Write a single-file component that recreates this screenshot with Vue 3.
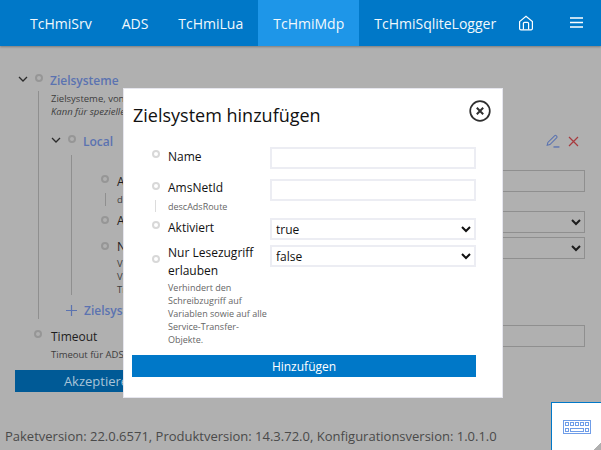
<template>
  <div class="page">
    <header class="topbar">
      <nav class="tabs">
        <a v-for="tab in tabs" :key="tab" class="tab" :class="{ active: tab === 'TcHmiMdp' }">{{ tab }}</a>
      </nav>
      <button class="bar-icon home">
        <svg width="16" height="16" viewBox="0 0 16 16" fill="none" stroke="#fff" stroke-width="1.2">
          <path d="M1.6 6.6 8 1.2l6.4 5.4v6.9a1.3 1.3 0 0 1-1.3 1.3H2.9a1.3 1.3 0 0 1-1.3-1.3z" />
          <path d="M5.4 14.6V8.6a1.2 1.2 0 0 1 1.2-1.2h2.8a1.2 1.2 0 0 1 1.2 1.2v6" />
        </svg>
      </button>
      <button class="bar-icon menu">
        <svg width="13" height="11" viewBox="0 0 13 11" stroke="#fff" stroke-width="1.4">
          <path d="M0 1h13M0 5.5h13M0 10h13" />
        </svg>
      </button>
    </header>

    <main class="content">
      <section class="tree">
        <div class="node-head">
          <svg class="chevron" width="10" height="6" viewBox="0 0 10 6" fill="none" stroke="#2b2b2b" stroke-width="1.3"><path d="M1 1l4 4 4-4" /></svg>
          <span class="dot"></span>
          <span class="link-title">Zielsysteme</span>
        </div>
        <div class="node-body outer">
          <p class="desc first">Zielsysteme, von</p>
          <p class="desc em">Kann für spezielle</p>

          <div class="node-head local">
            <svg class="chevron" width="10" height="6" viewBox="0 0 10 6" fill="none" stroke="#2b2b2b" stroke-width="1.3"><path d="M1 1l4 4 4-4" /></svg>
            <span class="dot"></span>
            <span class="link-title">Local</span>
            <span class="actions">
              <svg width="14" height="14" viewBox="0 0 15 14" fill="none" stroke="#5b73b0" stroke-width="1.1">
                <path d="M1.2 11.6 2 8.6 9.4 1.2a1 1 0 0 1 1.4 0l.8.8a1 1 0 0 1 0 1.4L4.2 10.8z" />
                <path d="M8 13.4h6.4" stroke-width="1.5" />
              </svg>
              <svg width="11" height="11" viewBox="0 0 11 11" stroke="#a83a3e" stroke-width="1.2"><path d="M1 1l9 9M10 1l-9 9" /></svg>
            </span>
          </div>

          <div class="node-body inner">
            <div class="row first-row">
              <div class="label-col">
                <span class="dot"></span>
                <span class="label">Ams</span>
              </div>
              <input class="back-input" type="text" />
            </div>
            <p class="desc tick">desc</p>
            <div class="row second-row">
              <div class="label-col">
                <span class="dot"></span>
                <span class="label up">Aktiv</span>
              </div>
              <select class="back-input"><option>true</option></select>
            </div>
            <div class="row third-row">
              <div class="label-col">
                <span class="dot"></span>
                <span class="label up">Nur</span>
              </div>
              <select class="back-input"><option>false</option></select>
            </div>
            <p class="desc line-one">Verhindert</p>
            <p class="desc">Variablen</p>
            <p class="desc">Transfer</p>
          </div>

          <div class="add-row">
            <svg width="11" height="11" viewBox="0 0 11 11" stroke="#5b73b0" stroke-width="1.2"><path d="M5.5 0v11M0 5.5h11" /></svg>
            <span class="link-title">Zielsystem</span>
          </div>
        </div>

        <div class="row timeout-row">
          <div class="label-col">
            <span class="dot"></span>
            <span class="label">Timeout</span>
          </div>
          <input class="back-input" type="text" />
        </div>
        <p class="desc timeout-desc">Timeout für ADS-Aufrufe</p>
        <button class="accept">Akzeptieren</button>
      </section>
    </main>

    <footer class="versions">Paketversion: 22.0.6571, Produktversion: 14.3.72.0, Konfigurationsversion: 1.0.1.0</footer>

    <div class="dialog">
      <div class="dialog-head">
        <h2>Zielsystem hinzufügen</h2>
        <svg class="close" width="22" height="22" viewBox="0 0 22 22" fill="none" stroke="#2f2f2f">
          <circle cx="11" cy="11" r="9.8" stroke-width="1.7" />
          <path d="M7.8 7.8l6.4 6.4M14.2 7.8l-6.4 6.4" stroke-width="2" />
        </svg>
      </div>

      <div v-for="field in fields" :key="field.name" class="field" :class="field.cls">
        <div class="field-label">
          <span class="dot light"></span>
          <div class="field-text">
            <div class="field-name">{{ field.name }}</div>
            <div v-if="field.desc" class="field-desc">{{ field.desc }}</div>
          </div>
        </div>
        <select v-if="field.value" class="field-input"><option>{{ field.value }}</option></select>
        <input v-else class="field-input" type="text" />
      </div>

      <button class="add">Hinzufügen</button>
    </div>

    <button class="keyboard">
      <svg width="28" height="14" viewBox="0 0 28 14" fill="none" stroke="#6f9de8" stroke-width="1">
        <rect x="0.5" y="0.5" width="27" height="13" />
        <rect x="2.5" y="2.5" width="3" height="3" />
        <rect x="7.5" y="2.5" width="3" height="3" />
        <rect x="12.5" y="2.5" width="3" height="3" />
        <rect x="17.5" y="2.5" width="3" height="3" />
        <rect x="22.5" y="2.5" width="3" height="3" />
        <rect x="2.5" y="8.5" width="3" height="3" />
        <rect x="7.5" y="8.5" width="13" height="3" />
        <rect x="22.5" y="8.5" width="3" height="3" />
      </svg>
    </button>
  </div>
</template>

<script setup>
const tabs = ['TcHmiSrv', 'ADS', 'TcHmiLua', 'TcHmiMdp', 'TcHmiSqliteLogger']

const fields = [
  { name: 'Name', cls: 'f-name' },
  { name: 'AmsNetId', desc: 'descAdsRoute', cls: 'f-net' },
  { name: 'Aktiviert', value: 'true', cls: 'f-active' },
  {
    name: 'Nur Lesezugriff erlauben',
    desc: 'Verhindert den Schreibzugriff auf Variablen sowie auf alle Service-Transfer-Objekte.',
    value: 'false',
    cls: 'f-read'
  }
]
</script>

<style>
html, body {
  margin: 0;
  background: #b0b0b0;
}
</style>

<style scoped>
.page {
  position: relative;
  width: 601px;
  height: 450px;
  overflow: hidden;
  display: flex;
  flex-direction: column;
  background: #b0b0b0;
  font-family: "Open Sans", sans-serif;
  color: #1d1d1d;
}

/* top navigation */
.topbar {
  height: 46px;
  flex: none;
  display: flex;
  align-items: stretch;
  background: #0078c8;
  box-shadow: 0 1px 2px rgba(0, 0, 0, 0.3);
}
.tabs {
  display: flex;
  padding-left: 15px;
}
.tab {
  padding: 0 15px;
  line-height: 48px;
  font-size: 14px;
  color: #f2f8fc;
}
.tab.active {
  background: #1e96e8;
}
.bar-icon {
  border: 0;
  padding: 0;
  background: none;
  display: flex;
  align-items: center;
}
.home {
  margin-left: 7px;
}
.menu {
  margin-left: 36px;
  margin-top: -1px;
}

/* settings tree behind the dialog */
.content {
  flex: 1;
  min-height: 0;
  padding: 26px 16px 0 15px;
}
.node-head {
  display: flex;
  align-items: center;
  height: 16px;
}
.chevron {
  margin-left: 3px;
  margin-top: -3px;
  margin-right: 7px;
}
.dot {
  flex: none;
  display: block;
  width: 4px;
  height: 4px;
  border: 2px solid #969696;
  border-radius: 50%;
  margin-top: -4px;
}
.link-title {
  margin-left: 7px;
  font-size: 12px;
  font-weight: 600;
  color: #5b73b0;
}
.node-body.outer {
  margin-left: 23px;
  padding-left: 12px;
  border-left: 1px solid #8f8f8f;
  margin-top: 3px;
}
.desc {
  margin: 0;
  font-size: 9.5px;
  line-height: 13px;
  color: #3d3d3d;
  white-space: nowrap;
}
.desc.first {
  padding-top: 1px;
}
.desc.em {
  font-style: italic;
}
.node-head.local {
  margin-top: 15px;
}
.node-head.local .chevron {
  margin-left: 0;
}
.actions {
  margin-left: auto;
  display: flex;
  gap: 8px;
  align-items: center;
  margin-right: 6px;
}
.node-body.inner {
  margin-left: 20px;
  padding-left: 29px;
  border-left: 1px solid #8f8f8f;
  margin-top: 6px;
  height: 140px;
}
.row {
  display: flex;
  align-items: center;
  justify-content: space-between;
}
.label-col {
  display: flex;
  align-items: center;
  gap: 8px;
}
.label {
  font-size: 12px;
  color: #1d1d1d;
}
.label.up {
  margin-top: -3px;
}
.back-input {
  box-sizing: border-box;
  width: 300px;
  height: 22px;
  border: 1px solid #8f8f8f;
  background: #b0b0b0;
  font: 12px "Open Sans", sans-serif;
  padding: 0 4px;
  color: #1d1d1d;
}
.first-row {
  padding-top: 15px;
}
.inner .desc {
  padding-left: 16px;
}
.inner .desc.tick {
  margin: 1px 0 0 4px;
  padding-left: 11px;
  border-left: 1px solid #8f8f8f;
}
.second-row {
  margin-top: 5px;
}
.third-row {
  margin-top: 4px;
}
.inner .desc.line-one {
  margin-top: -2px;
}
.add-row {
  display: flex;
  align-items: center;
  height: 18px;
  margin-left: 15px;
  margin-top: 6px;
}
.timeout-row {
  margin-left: 19px;
  margin-top: 6px;
}
.timeout-row .label-col {
  gap: 9px;
}
.timeout-desc {
  margin-left: 36px;
  margin-top: 1px;
}
.accept {
  display: block;
  margin-top: 9px;
  width: 170px;
  height: 22px;
  border: 0;
  padding: 0;
  background: #005a96;
  color: #a9c4d8;
  font: 13px "Open Sans", sans-serif;
}

.versions {
  flex: none;
  padding: 0 0 5px 5px;
  font-size: 13px;
  line-height: 18px;
  color: #4a4a4a;
  white-space: nowrap;
}

/* modal dialog */
.dialog {
  position: absolute;
  left: 123px;
  top: 88px;
  box-sizing: border-box;
  width: 380px;
  height: 310px;
  padding: 0 26px 0 8px;
  background: #fff;
  border: 1px solid #e6e6ee;
}
.dialog-head {
  display: flex;
  justify-content: space-between;
  height: 58px;
  margin-right: -15px;
}
.dialog-head h2 {
  margin: 13px 0 0 1px;
  font-size: 18px;
  font-weight: 400;
  line-height: 26px;
  color: #111;
}
.close {
  margin-top: 11px;
}
.field {
  display: flex;
  align-items: flex-start;
  justify-content: space-between;
}
.field-label {
  display: flex;
  width: 138px;
  flex: none;
}
.dot.light {
  border-color: #d8d8d8;
  margin: 3px 0 0 20px;
}
.field-text {
  margin-left: 8px;
  flex: 1;
}
.field-name {
  font-size: 12px;
  line-height: 18px;
  color: #111;
}
.f-name .field-name {
  margin-top: 1px;
}
.f-active .field-name {
  margin-top: 1px;
}
.f-read .field-name {
  margin-top: -1px;
}
.f-read .dot.light {
  margin-top: 10px;
}
.f-read .field-desc {
  margin-top: 1px;
}
.f-net .field-desc {
  position: relative;
  margin-top: 3px;
}
/* small tick next to the description */
.f-net .field-desc::before {
  content: "";
  position: absolute;
  left: -13px;
  top: 0;
  width: 1px;
  height: 12px;
  background: #dcdcdc;
}
.field-desc {
  font-size: 9px;
  line-height: 13px;
  color: #666;
}
.field-input {
  box-sizing: border-box;
  flex: none;
  width: 206px;
  height: 22px;
  border: 2px solid #ecedf3;
  background: #fff;
  padding: 0;
  font: 12px "Open Sans", sans-serif;
  color: #111;
}
.f-name {
  height: 32px;
}
.f-net {
  height: 39px;
}
.f-active {
  height: 27px;
}
.f-read {
  height: 110px;
}
.add {
  display: block;
  width: 100%;
  height: 22px;
  border: 0;
  padding: 0;
  background: #0078c8;
  color: #fff;
  font: 500 12px "Open Sans", sans-serif;
}

.keyboard {
  position: absolute;
  left: 551px;
  top: 402px;
  width: 50px;
  height: 48px;
  padding: 0;
  border: 0;
  border-top: 1px solid #0078c8;
  border-left: 1px solid #0078c8;
  background: linear-gradient(135deg, #fff calc(100% - 5px), #b0b0b0 calc(100% - 5px));
  display: flex;
  align-items: center;
  justify-content: center;
}
</style>
